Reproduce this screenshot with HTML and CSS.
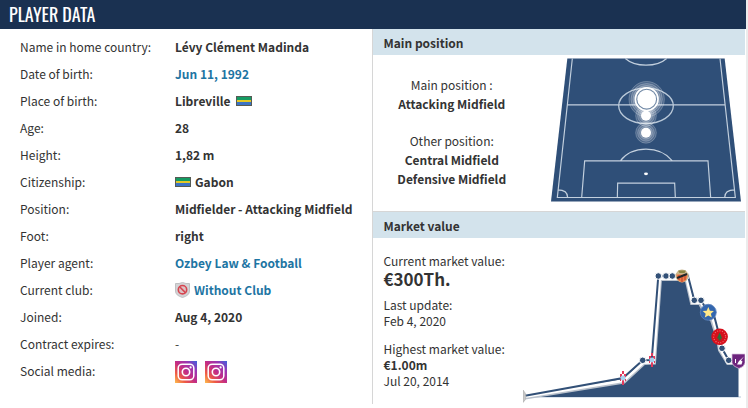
FILE: index.html
```html
<!DOCTYPE html>
<html lang="en">
<head>
<meta charset="utf-8">
<title>Player data</title>
<link rel="stylesheet" href="styles.css">
</head>
<body>
<svg class="defs" aria-hidden="true">
  <defs>
    <linearGradient id="insta" x1="0" y1="1" x2="1" y2="0">
      <stop offset="0" stop-color="#fdc050"/><stop offset=".25" stop-color="#ee5a45"/>
      <stop offset=".5" stop-color="#c22c86"/><stop offset=".75" stop-color="#9a35b4"/><stop offset="1" stop-color="#3f63dd"/>
    </linearGradient>
    <symbol id="flag" viewBox="0 0 16 10">
      <path fill="#555b55" d="M0 0h16v10H0z"/><path fill="#149b62" d="M1 1h14v3H1z"/>
      <path fill="#e3c827" d="M1 4h14v2H1z"/><path fill="#3b73c6" d="M1 6h14v3H1z"/>
    </symbol>
    <symbol id="instagram" viewBox="0 0 22 22">
      <path fill="url(#insta)" d="M0 0h22v22H0z"/>
      <rect x="3.2" y="3.2" width="15.6" height="15.6" rx="4" fill="none" stroke="#fff" stroke-width="1.5"/>
      <circle cx="11" cy="11" r="3.7" fill="none" stroke="#fff" stroke-width="1.6"/>
      <circle cx="15.6" cy="6.4" r="1.1" fill="#fff"/>
    </symbol>
    <symbol id="celta" viewBox="-4 -8 8 16">
      <path fill="#e23a5c" d="M-1-7h2v3h-2zM-3-4h2v3h-2zM1-4h2v3h-2zM-1 1h2v6h-2z"/>
      <circle r="2.5" fill="#a9d0ee"/><path fill="#e23a5c" d="M-3 1h1v2h-1zM2 1h1v2h-1z"/>
    </symbol>
  </defs>
</svg>
<main class="box">
  <h1 class="title">PLAYER DATA</h1>
  <div class="columns">
    <dl class="facts">
      <dt>Name in home country:</dt><dd>Lévy Clément Madinda</dd>
      <dt>Date of birth:</dt><dd><a href="#">Jun 11, 1992</a></dd>
      <dt>Place of birth:</dt><dd class="spaced">Libreville <svg class="flag" role="img" aria-label="Gabon"><use href="#flag"/></svg></dd>
      <dt>Age:</dt><dd>28</dd>
      <dt>Height:</dt><dd>1,82 m</dd>
      <dt>Citizenship:</dt><dd><svg class="flag" aria-hidden="true"><use href="#flag"/></svg>Gabon</dd>
      <dt>Position:</dt><dd>Midfielder - Attacking Midfield</dd>
      <dt>Foot:</dt><dd>right</dd>
      <dt>Player agent:</dt><dd><a href="#">Ozbey Law &amp; Football</a></dd>
      <dt>Current club:</dt>
      <dd>
        <svg class="crest" viewBox="0 0 15 16" aria-hidden="true">
          <path d="M.5 1.5Q4 2 7.500.5 11 2 14.500 1.500V9q0 4.500-7 6.500-7-2-7-6.500z" fill="#d3d3d5" stroke="#bfbfc2"/>
          <circle cx="7.500" cy="7.700" r="4.200" fill="#dcc2c4" stroke="#d64550" stroke-width="1.600"/>
          <path d="M4.600 4.800l5.800 5.800" stroke="#d64550" stroke-width="1.600"/>
        </svg>
        <a href="#">Without Club</a>
      </dd>
      <dt>Joined:</dt><dd>Aug 4, 2020</dd>
      <dt>Contract expires:</dt><dd class="plain">-</dd>
      <dt>Social media:</dt>
      <dd class="social">
        <a href="#" aria-label="Instagram"><svg class="insta"><use href="#instagram"/></svg></a>
        <a href="#" aria-label="Instagram, second account"><svg class="insta"><use href="#instagram"/></svg></a>
      </dd>
    </dl>
    <div class="side">
      <section>
        <h2 class="band">Main position</h2>
        <div class="position">
          <div class="roles">
            <p>Main position :<br><b>Attacking Midfield</b></p>
            <p>Other position:<br><b>Central Midfield</b><br><b>Defensive Midfield</b></p>
          </div>
          <svg class="pitch" viewBox="33 24 570 429" role="img" aria-label="Positions on the pitch">
            <path fill="#2f4f78" d="M82 24h472l49 429H33z"/>
            <path d="M97 24 52 441h534L540 24M82 163h472M125 441l9-110h370l8 110M232 441l1-43h171l2 43M241 331q27-35 77-35t79 35M256 24q22 20 62 20t62-20M53 418q30 0 30 23M584 418q-30 0-30 23" fill="none" stroke="#c3d0de" stroke-width="3.500"/>
            <ellipse cx="318" cy="166" rx="82" ry="53" fill="none" stroke="#b9c8d8" stroke-width="4"/>
            <ellipse cx="318" cy="370" rx="6" ry="4" fill="#fff"/>
            <g fill="#fff" fill-opacity=".14" stroke="#fff" stroke-opacity=".35" stroke-width="2">
              <circle cx="320" cy="146" r="53"/><circle cx="320" cy="146" r="47"/><circle cx="320" cy="146" r="41"/>
              <circle cx="318" cy="196" r="31"/><circle cx="318" cy="196" r="25"/><circle cx="318" cy="196" r="19"/>
              <circle cx="318" cy="247" r="31"/><circle cx="318" cy="247" r="25"/><circle cx="318" cy="247" r="19"/>
            </g>
            <circle cx="320" cy="146" r="34" fill="#7088a5" stroke="#fff" stroke-width="5"/>
            <g fill="#fff"><circle cx="320" cy="146" r="28"/><circle cx="318" cy="196" r="15"/><circle cx="318" cy="247" r="15"/></g>
          </svg>
        </div>
      </section>
      <section>
        <h2 class="band market">Market value</h2>
        <div class="value">
          <div class="figures">
            <p>Current market value:<br><strong>€300Th.</strong></p>
            <p>Last update:<br>Feb 4, 2020</p>
            <p>Highest market value:<br><b>€1.00m</b><br>Jul 20, 2014</p>
          </div>
          <svg class="chart" viewBox="523 265 222 140" role="img" aria-label="Market value history">
            <path d="M525 398H741" stroke="#b7c8d9"/>
            <path fill="#325077" d="M525 398 623 379.500 643 361.500 652 361 658 277H688L694.500 301.500 701 301.500 708 313 714 318 720 338 722 349.500 729 361.500H738.500V398z"/>
            <path d="M525 398.500 624 382.500 644 364 654 363.500 660 280H686.500L692 304H700L706 316 712 321 718 340 720 351 728 364H738" fill="none" stroke="#b9c1cc" stroke-width="4"/>
            <path d="M525 397.500 623.500 381.500 643.500 363.500 653.500 363 659.500 279.500H687L692.500 303.500H701L708 315 713 320 719 340 721 351 728 363.500H738" fill="none" stroke="#fff" stroke-width="3"/>
            <path d="M525 396.700 623 379 642.700 361.300 651.700 361 658.300 277H688L694.300 301.300 701 301.300 708 313 714.500 318 719.700 338 722 349.300 728.700 361.300H738" fill="none" stroke="#325077" stroke-width="2"/>
            <g fill="#325077" stroke="#fff">
              <circle cx="642.700" cy="361.300" r="3.300"/><circle cx="658.300" cy="277" r="3.300"/><circle cx="666" cy="277" r="3.300"/>
              <circle cx="672.300" cy="277" r="3.300"/><circle cx="686" cy="277" r="3.300"/><circle cx="694.300" cy="301.300" r="3.300"/>
              <circle cx="701" cy="301.300" r="3.300"/><circle cx="722" cy="349.300" r="3.300"/><circle cx="728.700" cy="361.300" r="3.300"/>
            </g>
            <path d="M523 391q3 3 3 6.500t-3 6z" fill="#c8c8c8" stroke="#a9a9a9" stroke-width=".6"/>
            <use href="#celta" x="619" y="371" width="8" height="16"/>
            <use href="#celta" x="648" y="353" width="8" height="16"/>
            <circle cx="682" cy="277" r="6.500" fill="#c9b58a"/>
            <path d="M678 271.500h8l-1.500 2.500h-5z" fill="#8b8442"/>
            <path d="M676.500 275.500h11q0 6-5.500 8-5.500-2-5.500-8z" fill="#f07a45"/>
            <path d="M679 276v5M682 276v7M685 276v5" stroke="#b64130"/>
            <path d="M677 279l10-4" stroke="#20262b" stroke-width="2"/>
            <circle cx="708.300" cy="313.300" r="8" fill="#3366ae" stroke="#5d83bb" stroke-width=".8"/>
            <path d="M708.300 308l1.600 3.700 4 .3-3 2.700.9 3.900-3.500-2.100-3.500 2.100.9-3.900-3-2.700 4-.3z" fill="#ffe88a"/>
            <circle cx="719.600" cy="337.800" r="8.300" fill="#d6101c"/>
            <circle cx="719.600" cy="337.800" r="6" fill="none" stroke="#ef6b6d" stroke-width="1.200" stroke-dasharray="1 1.500"/>
            <circle cx="719.600" cy="338" r="4.600" fill="#d4121c"/>
            <path d="M719.600 333.500l2.600 6h-1.600v2h-2v-2h-1.600z" fill="#28703a"/>
            <path d="M732 355h13v9q-1 4-6 5.500-6-2-7-5.500z" fill="#6d247d" stroke="#d9c6df" stroke-width=".7"/>
            <path d="M737 365.500l2-3.500 5-4.500-3 4 1.500 1-1 3z" fill="#fff"/><path d="M735.500 360v4" fill="none" stroke="#fff"/>
          </svg>
        </div>
      </section>
    </div>
  </div>
</main>
</body>
</html>
```
FILE: styles.css
```css
* { box-sizing: border-box; }
body {
  margin: 0;
  padding-right: 2px;
  min-height: 100vh;
  display: flex;
  background: #ececec;
  color: #333;
  font: 12px/16px "Noto Sans CJK SC", sans-serif;
}
.defs { position: absolute; width: 0; height: 0; }
.box { flex: 1; min-width: 0; background: #fff; }
.title {
  margin: 0;
  padding: 0 9px;
  background: #1a3151;
  color: #fff;
  font: 400 18px/29px "Oswald", "Roboto Condensed", "Liberation Sans Narrow", sans-serif;
}
.columns { display: grid; grid-template-columns: 1fr 1fr; padding-right: 1px; }
.facts {
  display: grid;
  grid-template-columns: 155px 1fr;
  grid-auto-rows: 27px;
  align-content: start;
  align-items: center;
  margin: 0;
  padding: 4px 0 0 20px;
}
dd { margin: 0; display: flex; align-items: center; gap: 4px; font-weight: 700; white-space: nowrap; }
.spaced { gap: 6px; }
.plain { font-weight: 400; }
.social { gap: 8px; padding-top: 2px; }
a { color: #1d75a3; text-decoration: none; }
.flag { width: 16px; height: 10px; }
.crest { width: 15px; height: 16px; }
.insta { display: block; width: 22px; height: 22px; }
.side { border-left: 1px solid #d6d6d6; margin-left: -1px; }
.band {
  margin: 0;
  padding: 2px 11px 0;
  background: #d3e3ec;
  font-size: 12px;
  line-height: 24px;
}
.market { border-top: 1px solid #d6d6d6; }
p { margin: 0; }
.position { display: flex; justify-content: space-between; padding: 3px 4px 9px 0; }
.roles { flex: 1; padding: 17px 20px 0 0; text-align: center; line-height: 19px; }
.roles p + p { margin-top: 18px; }
.pitch { width: 190px; height: 144px; }
.value { display: flex; justify-content: space-between; padding: 15px 0 0 11px; }
.figures { white-space: nowrap; }
.figures p + p { margin-top: 12px; }
.figures p:first-child + p { margin-top: 8px; }
.figures strong { font-size: 17px; line-height: 20px; }
.chart { flex: none; width: 222px; height: 140px; margin-top: 11px; }
```
